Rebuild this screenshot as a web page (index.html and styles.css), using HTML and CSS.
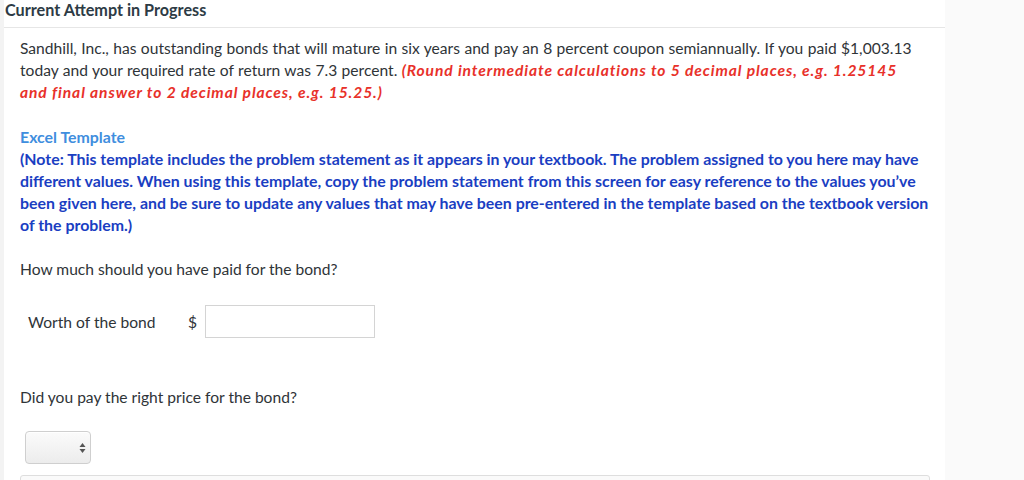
FILE: index.html
```html
<!DOCTYPE html>
<html>
<head>
<meta charset="utf-8">
<link rel="stylesheet" href="styles.css">
</head>
<body>
<div class="page">
  <div class="strip"></div>
  <div class="main">
    <div class="header">Current Attempt in Progress</div>
    <div class="content">
      <p class="para">Sandhill, Inc., has outstanding bonds that will mature in six years and pay an 8 percent coupon semiannually. If you paid $1,003.13 today and your required rate of return was 7.3 percent. <span class="red">(Round intermediate calculations to 5 decimal places, e.g. 1.25145 and final answer to 2 decimal places, e.g. 15.25.)</span></p>
      <div class="template">
        <div class="excel">Excel Template</div>
        <div class="note">(Note: This template includes the problem statement as it appears in your textbook. The problem assigned to you here may have different values. When using this template, copy the problem statement from this screen for easy reference to the values you’ve been given here, and be sure to update any values that may have been pre-entered in the template based on the textbook version of the problem.)</div>
      </div>
      <p class="question">How much should you have paid for the bond?</p>
      <div class="row">
        <span class="label">Worth of the bond</span>
        <span class="dollar">$</span>
        <div class="input"></div>
      </div>
      <p class="question2">Did you pay the right price for the bond?</p>
      <div class="select">
        <svg class="arrows" width="7" height="12" viewBox="0 0 7 12"><path d="M3.5 1 L6.5 5 L0.5 5 Z" fill="#555"/><path d="M3.5 11 L6.5 7 L0.5 7 Z" fill="#555"/></svg>
      </div>
      <div class="bottombox"></div>
    </div>
  </div>
  <div class="side"></div>
</div>
</body>
</html>
```

FILE: styles.css
```css
html, body {
  margin: 0;
  padding: 0;
  background: #fafafa;
  font-family: Lato, "Open Sans", sans-serif;
  color: #2f3438;
  overflow: hidden;
}
.page {
  display: flex;
  height: 480px;
  overflow: hidden;
}
.strip {
  width: 4px;
  flex-shrink: 0;
  background: #f3f3f3;
}
.main {
  width: 941px;
  flex-shrink: 0;
  background: #ffffff;
  display: flex;
  flex-direction: column;
}
.side {
  flex: 1;
  background: #fafafa;
}
.header {
  flex-shrink: 0;
  height: 27px;
  line-height: 19px;
  font-size: 16.2px;
  font-weight: bold;
  color: #2d3b45;
  padding-left: 1px;
  border-bottom: 1px solid #e6e6e6;
}
.content {
  flex-shrink: 0;
  padding: 9px 16px 0 16px;
  font-size: 15.6px;
  line-height: 22px;
}
p {
  margin: 0;
}
.para {
  color: #2f3438;
  padding-right: 8px;
  word-spacing: 0.4px;
}
.red {
  color: #e8312a;
  font-style: italic;
  font-weight: bold;
  letter-spacing: 0.9px;
  word-spacing: 0;
}
.template {
  margin-top: 23px;
  font-weight: bold;
  font-size: 15.9px;
}
.excel {
  color: #3f8ede;
}
.note {
  color: #1a3ec2;
}
.question {
  margin-top: 22px;
}
.row {
  display: flex;
  align-items: center;
  margin-top: 25px;
  padding-left: 8px;
  height: 33px;
}
.label {
  width: 160px;
}
.dollar {
  width: 17px;
}
.input {
  width: 168px;
  height: 31px;
  border: 1px solid #d4d4d4;
  background: #fff;
}
.question2 {
  margin-top: 48px;
}
.select {
  margin-top: 23px;
  margin-left: 5px;
  width: 64px;
  height: 31px;
  border: 1px solid #cfcfcf;
  border-radius: 4px;
  background: linear-gradient(#fbfbfb, #ececec);
  box-shadow: inset 0 1px 1px #fff;
  display: flex;
  align-items: center;
  justify-content: flex-end;
}
.arrows {
  margin-right: 4px;
}
.bottombox {
  margin-top: 11px;
  margin-right: -1px;
  height: 20px;
  border: 1px solid #dedede;
  border-radius: 3px 3px 0 0;
  background: #fafafa;
}
```
